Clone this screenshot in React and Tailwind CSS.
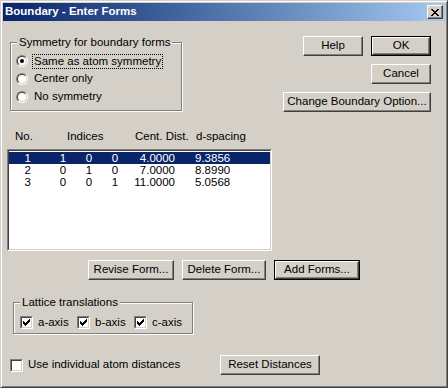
import React from "react";

const FONT = { fontFamily: '"Liberation Sans", Arial, sans-serif' };

const Button = ({ children, width, isDefault = false }) => {
  const inner = (
    <div
      className="flex h-full w-full items-center justify-center border border-t-white border-l-white border-r-[#404040] border-b-[#404040] bg-[#d4d0c8] text-[11.5px] text-black shadow-[inset_-1px_-1px_0_#808080]"
    >
      {children}
    </div>
  );
  if (isDefault) {
    return (
      <div className="h-[20px] border border-black" style={{ width }}>
        {inner}
      </div>
    );
  }
  return (
    <div className="h-[20px]" style={{ width }}>
      {inner}
    </div>
  );
};

const Radio = ({ checked }) => (
  <div className="h-[12px] w-[12px] rounded-full border border-t-[#808080] border-l-[#808080] border-r-white border-b-white">
    <div className="flex h-full w-full items-center justify-center rounded-full border border-t-[#404040] border-l-[#404040] border-r-[#d4d0c8] border-b-[#d4d0c8] bg-white">
      {checked && <div className="h-[4px] w-[4px] rounded-full bg-black" />}
    </div>
  </div>
);

const Checkbox = ({ checked }) => (
  <div className="h-[13px] w-[13px] shrink-0 border border-t-[#808080] border-l-[#808080] border-r-white border-b-white">
    <div className="flex h-full w-full items-center justify-center border border-t-[#404040] border-l-[#404040] border-r-[#d4d0c8] border-b-[#d4d0c8] bg-white">
      {checked && (
        <svg width="7" height="7" viewBox="0 0 7 7">
          <path d="M0 2h1v1h1v1h1v-1h1v-1h1v-1h1v-1h1v3h-1v1h-1v1h-1v1h-1v1h-1v-1h-1v-1h-1z" fill="#000" />
        </svg>
      )}
    </div>
  </div>
);

const GroupBox = ({ label, width, height, children, className = "" }) => (
  <div
    className={`relative border border-[#808080] shadow-[inset_1px_1px_0_#fff,1px_1px_0_#fff] ${className}`}
    style={{ width, height }}
  >
    <div className="absolute left-[6px] top-[-8px] bg-[#d4d0c8] px-[2px] text-[11.5px] leading-[14px]">
      {label}
    </div>
    {children}
  </div>
);

const forms = [
  { no: 1, h: 1, k: 0, l: 0, dist: "4.0000", d: "9.3856" },
  { no: 2, h: 0, k: 1, l: 0, dist: "7.0000", d: "8.8990" },
  { no: 3, h: 0, k: 0, l: 1, dist: "11.0000", d: "5.0568" },
];

const App = () => {
  return (
    <div
      className="flex h-[388px] w-[448px] flex-col border border-t-[#d4d0c8] border-l-[#d4d0c8] border-r-[#404040] border-b-[#404040] bg-[#d4d0c8] p-[2px] text-black shadow-[inset_1px_1px_0_#fff,inset_-1px_-1px_0_#808080]"
      style={FONT}
    >
      {/* title bar */}
      <div className="flex h-[18px] shrink-0 items-center bg-gradient-to-r from-[#0a246a] to-[#a6caf0] pl-[2px] pr-[2px]">
        <span className="text-[11.5px] font-bold leading-none text-white">Boundary - Enter Forms</span>
        <div className="ml-auto flex h-[14px] w-[16px] items-center justify-center border border-t-white border-l-white border-r-[#404040] border-b-[#404040] bg-[#d4d0c8] shadow-[inset_-1px_-1px_0_#808080]">
          <svg width="8" height="7" viewBox="0 0 8 7">
            <path d="M0 0h2v1h1v1h2v-1h1v-1h2v1h-1v1h-1v1h-1v1h1v1h1v1h1v1h-2v-1h-1v-1h-2v1h-1v1h-2v-1h1v-1h1v-1h1v-1h-1v-1h-1v-1h-1z" fill="#000" />
          </svg>
        </div>
      </div>

      {/* client area */}
      <div className="flex flex-1 flex-col text-[11.5px]">
        {/* top row */}
        <div className="mt-[15px] flex items-start">
          <GroupBox label="Symmetry for boundary forms" width={172} height={69} className="ml-[7px] mt-[6px]">
            <div className="flex flex-col pl-[5px] pt-[9px]">
              <div className="flex h-[18px] items-center gap-[4px]">
                <Radio checked />
                <span className="border border-dotted border-black px-[1px] leading-[13px]">Same as atom symmetry</span>
              </div>
              <div className="flex h-[18px] items-center gap-[5px]">
                <Radio />
                <span className="px-[1px]">Center only</span>
              </div>
              <div className="flex h-[18px] items-center gap-[5px]">
                <Radio />
                <span className="px-[1px]">No symmetry</span>
              </div>
            </div>
          </GroupBox>

          <div className="ml-auto mr-[14px] flex flex-col items-end gap-[8px]">
            <div className="flex gap-[8px]">
              <Button width={60}>Help</Button>
              <Button width={60} isDefault>OK</Button>
            </div>
            <Button width={60}>Cancel</Button>
            <Button width={148}>Change Boundary Option...</Button>
          </div>
        </div>

        {/* list header */}
        <div className="ml-[12px] mt-[17px] flex h-[14px] items-center leading-[14px]">
          <span className="w-[52px]">No.</span>
          <span className="w-[68px]">Indices</span>
          <span className="w-[61px]">Cent. Dist.</span>
          <span>d-spacing</span>
        </div>

        {/* list box */}
        <div className="ml-[4px] mt-[6px] h-[102px] w-[265px] border border-t-[#808080] border-l-[#808080] border-r-white border-b-white">
          <div className="h-full w-full border border-t-[#404040] border-l-[#404040] border-r-[#d4d0c8] border-b-[#d4d0c8] bg-white pt-[1px]">
            {forms.map((f, i) => (
              <div
                key={f.no}
                className={`flex h-[12px] items-center text-[11.5px] leading-[12px] ${i === 0 ? "bg-[#0a246a] text-white" : "text-black"}`}
              >
                <span className="w-[22px] text-right">{f.no}</span>
                <span className="w-[19px]" />
                <span className="w-[26px] text-center">{f.h}</span>
                <span className="w-[26px] text-center">{f.k}</span>
                <span className="w-[26px] text-center">{f.l}</span>
                <span className="w-[47px] text-right">{f.dist}</span>
                <span className="w-[20px]" />
                <span>{f.d}</span>
              </div>
            ))}
          </div>
        </div>

        {/* form buttons */}
        <div className="ml-[85px] mt-[9px] flex gap-[8px]">
          <Button width={86}>Revise Form...</Button>
          <Button width={84}>Delete Form...</Button>
          <Button width={86} isDefault>Add Forms...</Button>
        </div>

        {/* lattice translations */}
        <GroupBox label="Lattice translations" width={180} height={32} className="ml-[10px] mt-[22px]">
          <div className="flex pl-[6px] pt-[13px]">
            {["a-axis", "b-axis", "c-axis"].map((axis) => (
              <div key={axis} className="flex h-[13px] w-[57px] items-center gap-[5px]">
                <Checkbox checked />
                <span>{axis}</span>
              </div>
            ))}
          </div>
        </GroupBox>

        {/* bottom row */}
        <div className="ml-[7px] mt-[21px] flex items-center">
          <Checkbox />
          <span className="ml-[5px] w-[192px]">Use individual atom distances</span>
          <Button width={100}>Reset Distances</Button>
        </div>
      </div>
    </div>
  );
};

export default App;
